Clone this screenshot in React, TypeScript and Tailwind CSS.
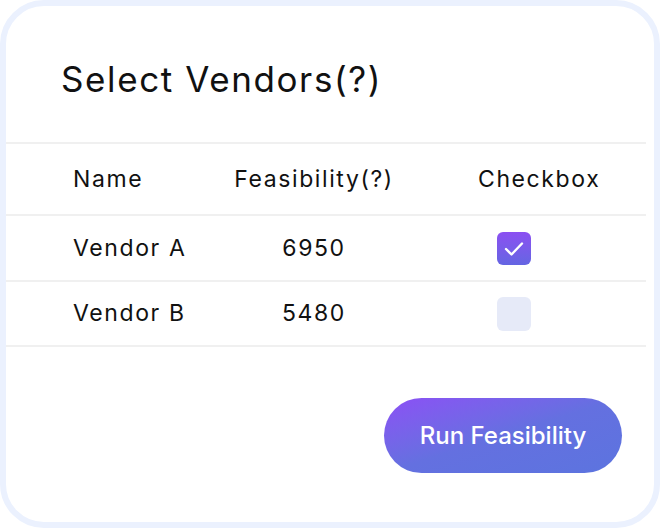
import React, { useState } from "react";

const vendors = [
  { name: "Vendor A", value: "6950", checked: true },
  { name: "Vendor B", value: "5480", checked: false },
];

export default function App() {
  const [rows, setRows] = useState(vendors);
  const toggle = (i: number) =>
    setRows((r) => r.map((v, j) => (j === i ? { ...v, checked: !v.checked } : v)));

  return (
    <div
      className="w-[660px] h-[528px] bg-white"
      style={{ fontFamily: "Inter, 'Open Sans', sans-serif" }}
    >
      <div className="w-full h-full rounded-[44px] border-[6px] border-[#ebf1fe] bg-white flex flex-col overflow-hidden">
        <div className="h-[136px] shrink-0 flex items-center pl-[55px] pt-[10px]">
          <h1 className="text-[35px] font-normal text-[#111111] tracking-[1.6px]">
            Select Vendors(?)
          </h1>
        </div>
        <div className="w-[640px] border-t-2 border-[#f0f0f0]">
          <div className="grid grid-cols-[220px_174px_1fr] h-[72px] items-center border-b-2 border-[#f0f0f0] text-[23px] tracking-[1.6px] text-[#111111]">
            <div className="pl-[67px]">Name</div>
            <div className="text-center pl-[2px]">Feasibility(?)</div>
            <div className="pl-[78px]">Checkbox</div>
          </div>
          {rows.map((v, i) => (
            <div
              key={v.name}
              className={
                i === 0
                  ? "grid grid-cols-[220px_174px_1fr] h-[66px] items-center border-b-2 border-[#f0f0f0] text-[23px] tracking-[1.6px] text-[#111111]"
                  : "grid grid-cols-[220px_174px_1fr] h-[65px] items-center border-b-2 border-[#f0f0f0] text-[23px] tracking-[1.6px] text-[#111111]"
              }
            >
              <div className="pl-[67px]">{v.name}</div>
              <div className="text-center pl-[2px]">{v.value}</div>
              <div className="pl-[97px] flex">
                <button
                  onClick={() => toggle(i)}
                  className={
                    v.checked
                      ? "w-[34px] h-[33px] rounded-[6px] bg-gradient-to-b from-[#8b4ff2] to-[#6465e2] flex items-center justify-center"
                      : "w-[34px] h-[34px] rounded-[6px] bg-[#e6eaf8]"
                  }
                >
                  {v.checked && (
                    <svg width="34" height="33" viewBox="0 0 34 33" fill="none">
                      <path
                        d="M9 17 L14.5 22.5 L25 11.5"
                        stroke="white"
                        strokeWidth="2.4"
                        strokeLinecap="round"
                        strokeLinejoin="round"
                      />
                    </svg>
                  )}
                </button>
              </div>
            </div>
          ))}
        </div>
        <div className="flex justify-end pt-[51px] pr-[32px]">
          <button className="w-[238px] h-[75px] rounded-full bg-gradient-to-br from-[#8b4ff5] via-[#6470e0] to-[#5c74df] text-white text-[24px] font-medium">
            Run Feasibility
          </button>
        </div>
      </div>
    </div>
  );
}
